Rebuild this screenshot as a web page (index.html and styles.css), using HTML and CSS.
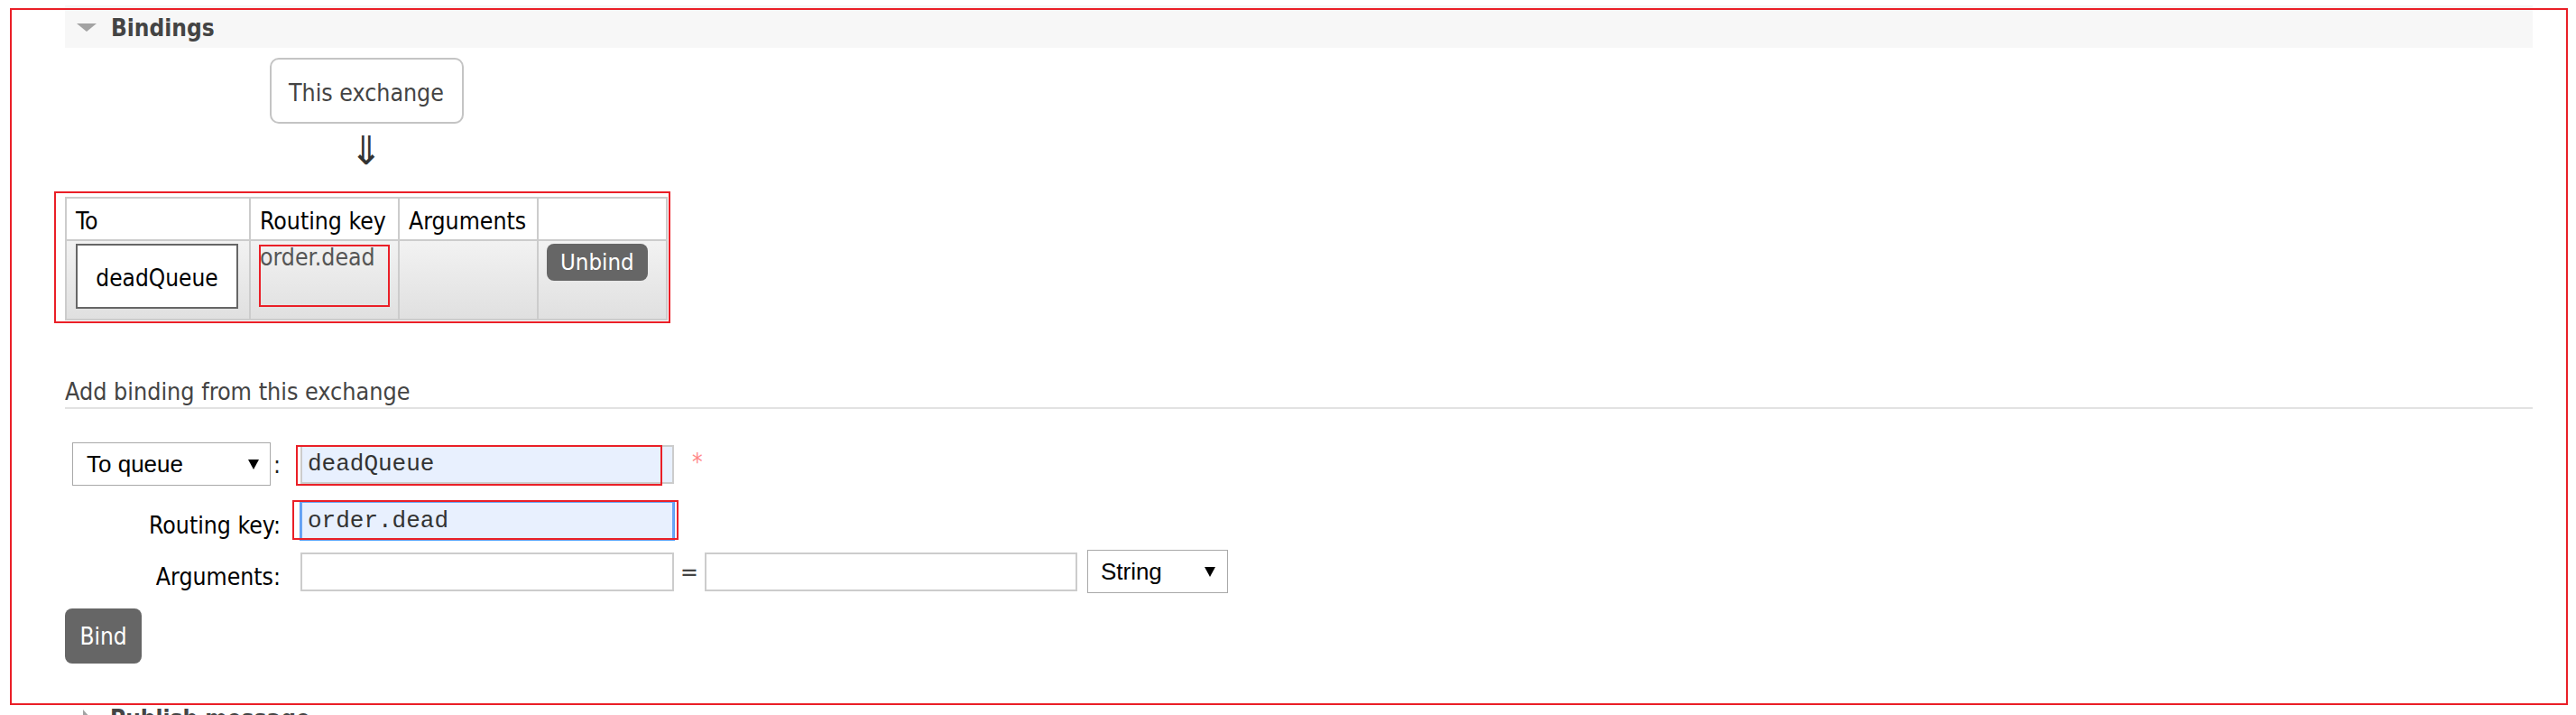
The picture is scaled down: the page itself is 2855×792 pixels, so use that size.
FILE: index.html
```html
<!DOCTYPE html>
<html lang="en">
<head>
<meta charset="utf-8">
<title>Exchange bindings</title>
<link rel="stylesheet" href="styles.css">
</head>
<body>
<div class="page">
  <section class="section">
    <h2 class="section-head"><span class="tri-down"></span>Bindings</h2>
    <div class="section-body">
      <div class="bindings-wrap">
        <div class="exchange-box">This exchange</div>
        <div class="arrow">&#8659;</div>
        <table class="bindings">
          <colgroup>
            <col class="c1"><col class="c2"><col class="c3"><col class="c4">
          </colgroup>
          <thead>
            <tr><th>To</th><th>Routing key</th><th>Arguments</th><th></th></tr>
          </thead>
          <tbody>
            <tr>
              <td><div class="queue-box">deadQueue</div></td>
              <td class="rk">order.dead</td>
              <td></td>
              <td><button class="btn btn-unbind" type="button">Unbind</button></td>
            </tr>
          </tbody>
        </table>
      </div>

      <h3 class="subhead">Add binding from this exchange</h3>

      <div class="form">
        <div class="frow frow-1">
          <div class="flabel">
            <div class="select select-dest">To queue<svg class="caret" viewBox="0 0 12 12" width="12" height="12"><path d="M0 1 H12 L6 12 Z" fill="#000"/></svg></div>
            <span class="colon">:</span>
          </div>
          <input class="inp inp-filled" type="text" value="deadQueue">
          <span class="req">*</span>
        </div>
        <div class="frow frow-2">
          <label class="flabel flabel-text">Routing key:</label>
          <input class="inp inp-filled inp-focus" type="text" value="order.dead">
        </div>
        <div class="frow frow-3">
          <label class="flabel flabel-text">Arguments:</label>
          <input class="inp" type="text" value="">
          <span class="eq">=</span>
          <input class="inp inp-val" type="text" value="">
          <div class="select select-type">String<svg class="caret" viewBox="0 0 12 12" width="12" height="12"><path d="M0 1 H12 L6 12 Z" fill="#000"/></svg></div>
        </div>
      </div>

      <button class="btn btn-bind" type="button">Bind</button>
    </div>
  </section>

  <section class="section section-hidden">
    <h2 class="section-head section-head-plain"><span class="tri-right"></span>Publish message</h2>
  </section>
</div>

<div class="annotations">
  <div class="annot annot-outer"></div>
  <div class="annot annot-table"></div>
  <div class="annot annot-rk"></div>
  <div class="annot annot-dq"></div>
  <div class="annot annot-rkinput"></div>
</div>
</body>
</html>
```

FILE: styles.css
```css
html, body {
  margin: 0;
  padding: 0;
  height: 792px;
  overflow: hidden;
  background: #fff;
}

body {
  position: relative;
  font-family: "DejaVu Sans Condensed", "DejaVu Sans", Verdana, sans-serif;
  font-size: 26.4px;
  color: #000;
}

.page {
  margin-left: 72px;
  width: 2735px;
  padding-top: 6px;
}

/* section header */
.section-head {
  margin: 0;
  height: 47px;
  display: flex;
  align-items: center;
  padding-left: 13px;
  padding-top: 2px;
  box-sizing: border-box;
  background: #f7f7f7;
  color: #444;
  font-size: 26px;
  font-weight: bold;
}

.section-head-plain {
  background: #fff;
}

.tri-down {
  width: 0;
  height: 0;
  border-left: 11px solid transparent;
  border-right: 11px solid transparent;
  border-top: 9px solid #a3a3a3;
  margin-right: 16px;
}

.tri-right {
  width: 0;
  height: 0;
  border-top: 10px solid transparent;
  border-bottom: 10px solid transparent;
  border-left: 9px solid #a3a3a3;
  margin-left: 7px;
  margin-right: 21px;
}

.section-hidden {
  margin-top: 36px;
}

/* bindings diagram */
.bindings-wrap {
  display: flex;
  flex-direction: column;
  align-items: center;
  width: max-content;
  margin-top: 11px;
}

.exchange-box {
  box-sizing: border-box;
  width: 215px;
  height: 73px;
  border: 2px solid #c4c4c4;
  border-radius: 10px;
  display: flex;
  align-items: center;
  justify-content: center;
  padding-top: 3px;
  font-size: 26.5px;
  color: #444;
}

.arrow {
  height: 81px;
  font-family: "DejaVu Sans", sans-serif;
  font-size: 44px;
  line-height: 60px;
  color: #333;
}

.bindings {
  border-collapse: collapse;
  table-layout: fixed;
  width: 666px;
  border: 2px solid #ccc;
}

.c1 { width: 204px; }
.c2 { width: 165px; }
.c3 { width: 154px; }
.c4 { width: 143px; }

.bindings th,
.bindings td {
  border: 2px solid #ccc;
  text-align: left;
  vertical-align: top;
  line-height: 30px;
}

.bindings th {
  font-weight: normal;
  padding: 10px 10px 5px;
  background: #fff;
}

.bindings td {
  padding: 3px 10px 11px;
  background: linear-gradient(#f2f2f2, #e0e0e0);
}

.bindings td:last-child {
  padding-left: 9px;
}

.queue-box {
  box-sizing: border-box;
  width: 180px;
  height: 72px;
  border: 2px solid #666;
  background: #fff;
  display: flex;
  align-items: center;
  justify-content: center;
  padding-top: 4px;
  font-size: 26px;
}

.rk {
  color: #555;
  padding-top: 2px;
}

.btn {
  font-family: "DejaVu Sans Condensed", "DejaVu Sans", Verdana, sans-serif;
  border: 0;
  background: #666;
  color: #fff;
  cursor: pointer;
  margin: 0;
}

.btn-unbind {
  height: 41px;
  padding: 0 15px;
  border-radius: 8px;
  font-size: 25.6px;
  line-height: 41px;
}

/* add binding */
.subhead {
  margin: 64px 0 0;
  font-size: 26.7px;
  font-weight: normal;
  line-height: 30px;
  color: #444;
  padding-bottom: 2px;
  border-bottom: 2px solid #e2e2e2;
}

.form {
  margin-top: 37px;
}

.frow {
  display: flex;
  align-items: center;
}

.frow-1 { height: 48px; }
.frow-2 { height: 43px; margin-top: 17px; }
.frow-3 { height: 48px; margin-top: 11px; }

.flabel {
  width: 239px;
  flex: none;
  display: flex;
  justify-content: flex-end;
  align-items: center;
  box-sizing: border-box;
}

.flabel-text {
  align-self: flex-end;
  line-height: 30px;
  color: #000;
}

.frow-2 .flabel-text { margin-bottom: 1px; }
.frow-3 .flabel-text { margin-bottom: 3px; }

.colon {
  margin-left: 3px;
  color: #222;
}

.select {
  box-sizing: border-box;
  height: 48px;
  border: 1px solid #a9a9a9;
  background: #fff;
  display: flex;
  align-items: center;
  justify-content: space-between;
  font-family: "Liberation Sans", Arial, sans-serif;
  font-size: 26px;
  color: #000;
}

.select-dest {
  width: 220px;
  padding: 0 12px 0 15px;
}

.select-type {
  width: 156px;
  margin-left: 11px;
  padding: 0 13px 0 14px;
}

.caret {
  display: block;
}

.inp {
  box-sizing: border-box;
  width: 414px;
  height: 43px;
  margin: 0 0 0 22px;
  border: 2px solid #ccc;
  padding: 0 6px;
  background: #fff;
  font-family: "Liberation Mono", "Courier New", monospace;
  font-size: 26px;
  color: #333;
  outline: none;
}

.inp-filled {
  background: #e8f0fe;
}

.inp-focus {
  border-color: #6aa5f5;
  box-shadow: 0 0 0 1px #5b9cf4;
}

.inp-val {
  margin-left: 0;
  width: 413px;
}

.eq {
  margin: 0 7px;
  color: #444;
}

.req {
  margin-left: 20px;
  align-self: flex-start;
  margin-top: 8px;
  color: #f88;
  font-size: 26px;
  line-height: 28px;
}

.btn-bind {
  display: block;
  margin-top: 17px;
  width: 85px;
  height: 61px;
  border-radius: 8px;
  font-size: 26px;
  padding: 0;
}

/* red annotation overlays */
.annotations {
  position: absolute;
  left: 0;
  top: 0;
  width: 0;
  height: 0;
}

.annot {
  position: absolute;
  box-sizing: border-box;
  border: 2px solid #ea1f27;
}

.annot-outer { left: 11px; top: 9px; width: 2835px; height: 772px; }
.annot-table { left: 60px; top: 212px; width: 683px; height: 146px; }
.annot-rk { left: 287px; top: 271px; width: 145px; height: 69px; }
.annot-dq { left: 328px; top: 493px; width: 406px; height: 45px; }
.annot-rkinput { left: 324px; top: 554px; width: 428px; height: 44px; }
```
